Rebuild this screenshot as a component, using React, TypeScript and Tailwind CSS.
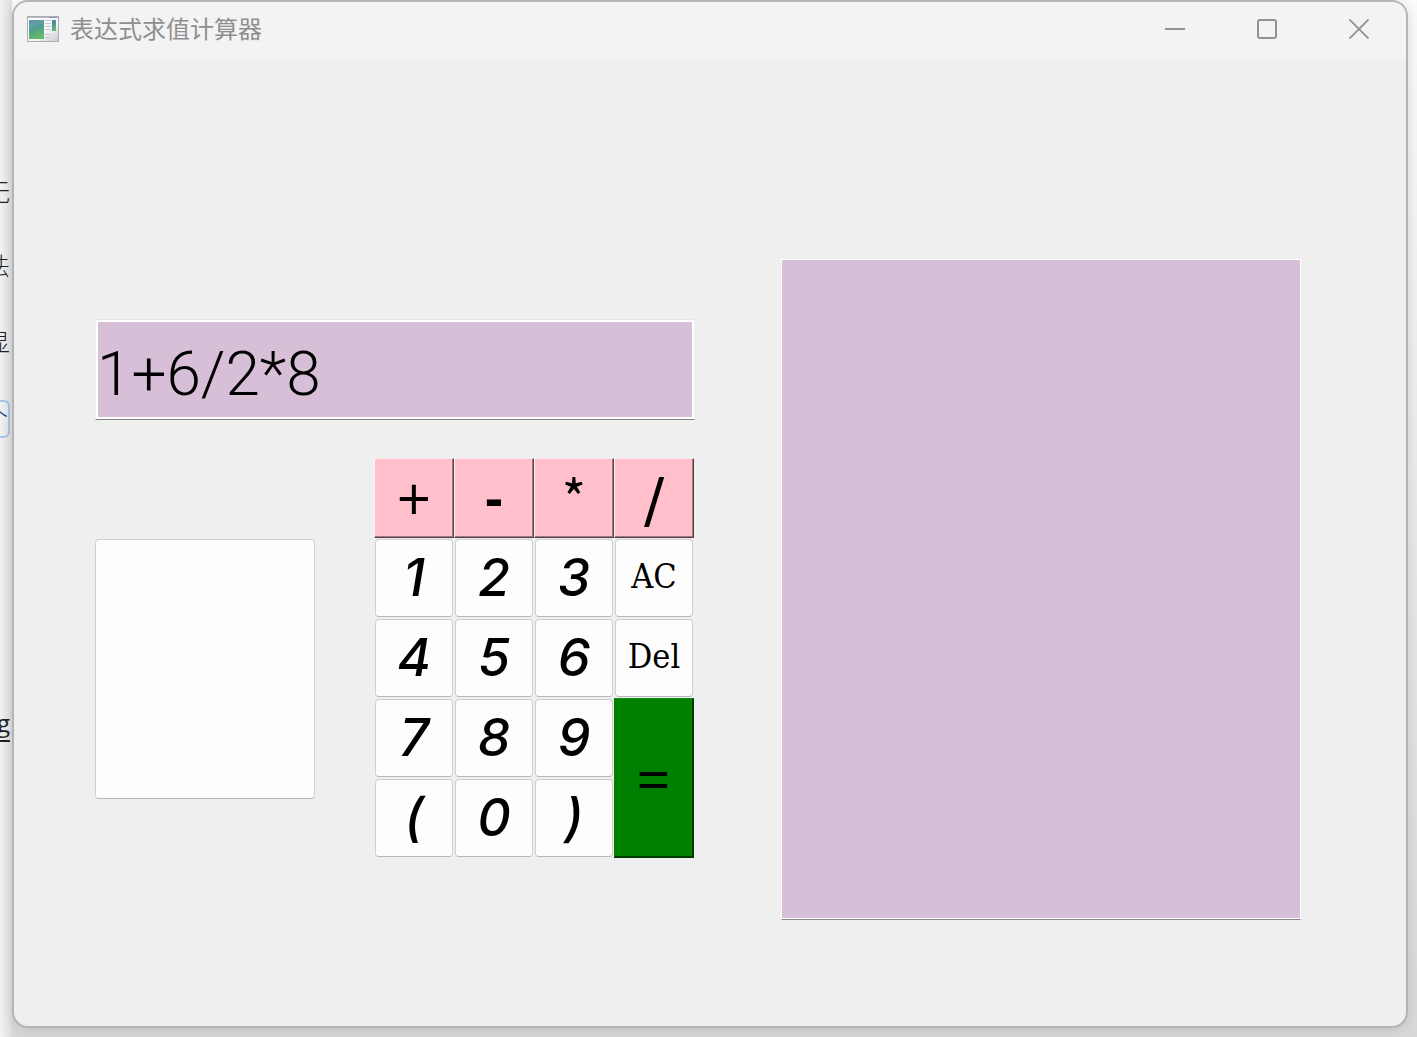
import { useState } from "react";

const plain =
  "m-px flex items-center justify-center overflow-hidden rounded-[4px] border border-[#cfcfcf] border-b-[#b8b8b8] bg-[#fdfdfd] leading-none text-black";
const operator =
  "flex items-center justify-center overflow-hidden border-t border-l border-t-[#f6ecee] border-l-[#fff3f5] border-r border-b border-r-[#504045] border-b-[#504045] bg-[#ffc0cb] leading-none text-black shadow-[inset_-1px_-1px_0_#a57b82]";
const digit = `${plain} font-['Inter'] text-[52px] font-medium italic`;
const word = `${plain} pb-1 font-['DejaVu_Serif_Condensed','DejaVu_Serif',serif] text-[34px]`;
const equals =
  "row-span-2 flex items-center justify-center border-t border-l border-r-2 border-b-2 border-t-[#129012] border-l-[#008000] border-r-[#003c00] border-b-[#003c00] bg-[#008000] font-['Open_Sans'] text-[60px] leading-none font-medium text-black";

type Key = { label: string; className: string };

const digits = (labels: string[]): Key[] => labels.map((label) => ({ label, className: digit }));

const keys: Key[] = [
  { label: "+", className: `${operator} font-['Open_Sans'] text-[60px] font-medium` },
  { label: "-", className: `${operator} pb-1 font-['Open_Sans'] text-[54px] font-bold` },
  { label: "*", className: `${operator} pb-1 font-['Noto_Sans_CJK_SC'] text-[52px]` },
  { label: "/", className: `${operator} pt-1 font-['DejaVu_Sans'] text-[60px]` },
  ...digits(["1", "2", "3"]),
  { label: "AC", className: word },
  ...digits(["4", "5", "6"]),
  { label: "Del", className: word },
  ...digits(["7", "8", "9"]),
  { label: "=", className: equals },
  ...digits(["(", "0", ")"]),
];

function AppIcon() {
  return (
    <svg width="32" height="26" viewBox="0 0 32 26" aria-hidden="true">
      <defs>
        <linearGradient id="pane" x1="0" y1="0" x2="0.3" y2="1">
          <stop offset="0" stopColor="#4b7fa5" />
          <stop offset="0.5" stopColor="#4f9c92" />
          <stop offset="1" stopColor="#66b96c" />
        </linearGradient>
        <linearGradient id="frame" x1="0" y1="0" x2="1" y2="1">
          <stop offset="0" stopColor="#ffffff" />
          <stop offset="0.6" stopColor="#f4f5f6" />
          <stop offset="1" stopColor="#c9cdd2" />
        </linearGradient>
      </defs>
      <rect x="0.5" y="0.5" width="31" height="25" fill="url(#frame)" stroke="#a9adb5" />
      <path d="M1 1.5h30" stroke="#b9bec6" />
      <path d="M22 1.5h8" stroke="#8f949c" />
      <rect x="2" y="4" width="15" height="19" fill="url(#pane)" />
      <path d="M2 14C7 10 11 8 17 7V4H2z" fill="#ffffff" opacity="0.12" />
      <path d="M18 4.5h6M18 7.5h6M18 10.5h6M18 13.5h6M18 18.5h6M18 21.5h5" stroke="#c6c8cb" />
      <rect x="25" y="4" width="4" height="11" fill="url(#pane)" />
    </svg>
  );
}

function BackgroundPage() {
  return (
    <aside
      aria-hidden="true"
      className="flex w-3 shrink-0 flex-col items-end overflow-hidden bg-linear-to-r from-[#f2f2f2] to-[#dedede] pt-[177px] pr-[2px] font-['Noto_Sans_CJK_SC',sans-serif] text-2xl leading-7 font-light text-[#222]"
    >
      <span>无</span>
      <span className="mt-[46px]">法</span>
      <span className="mt-12">显</span>
      <span className="mt-[45px] h-[38px] w-10 shrink-0 rounded-md border-2 border-[#a9c4ea] text-right text-[#1f3c88]">
        个
      </span>
      <span className="mt-[271px] font-['Open_Sans'] font-normal underline underline-offset-8">g</span>
    </aside>
  );
}

export default function App() {
  const [expression, setExpression] = useState("1+6/2*8");
  const [history, setHistory] = useState("");

  const press = (label: string) => {
    if (label === "AC") setExpression("");
    else if (label === "Del") setExpression((e) => e.slice(0, -1));
    else if (label === "=") setHistory((h) => `${h}${expression}\n`);
    else setExpression((e) => e + label);
  };

  return (
    <div className="flex min-h-screen overflow-hidden bg-[#f1f1f1]">
      <BackgroundPage />
      <div className="flex flex-1 bg-linear-to-b from-[#fafafa] to-[#d8d8d8] pr-[9px] pb-[9px]">
        <div className="flex flex-1 flex-col overflow-hidden rounded-2xl border-2 border-[#b4b4b4] bg-[#efefef] shadow-[0_2px_12px_rgba(0,0,0,0.12)]">
          <header className="flex h-14 items-center bg-[#f3f3f3] pr-px pb-[2px] pl-[13px]">
            <AppIcon />
            <h1 className="ml-[11px] flex-1 pb-[2px] font-['Noto_Sans_CJK_SC',sans-serif] text-2xl leading-8 text-[#8f8f8f]">
              表达式求值计算器
            </h1>
            <button aria-label="最小化" className="flex h-full w-[92px] items-center justify-center">
              <svg width="20" height="20" viewBox="0 0 20 20" fill="none" stroke="#919191" strokeWidth="2">
                <path d="M0 10h20" />
              </svg>
            </button>
            <button aria-label="最大化" className="flex h-full w-[92px] items-center justify-center">
              <svg width="20" height="20" viewBox="0 0 20 20" fill="none" stroke="#919191" strokeWidth="2">
                <rect x="1" y="1" width="18" height="18" rx="2" />
              </svg>
            </button>
            <button aria-label="关闭" className="flex h-full w-[92px] items-center justify-center">
              <svg width="20" height="20" viewBox="0 0 20 20" fill="none" stroke="#919191" strokeWidth="1.8">
                <path d="M0.5 0.5l19 19M19.5 0.5l-19 19" />
              </svg>
            </button>
          </header>

          <main className="grid flex-1 grid-cols-[600fr_520fr] gap-[86px] pt-[201px] pr-[105px] pb-[106px] pl-[81px]">
            <section className="flex flex-col pt-[60px]">
              <input
                aria-label="表达式"
                value={expression}
                onChange={(e) => setExpression(e.target.value)}
                className="h-[101px] w-full border border-[#f2f2f2] border-t-[#e4e4e4] border-b-[#858585] bg-[#d8bfd8] px-px pt-2 font-['Roboto'] text-[62px] leading-none font-light text-black shadow-[inset_0_0_0_2px_#fff] outline-none"
              />
              <div className="mt-[38px] flex">
                <button
                  aria-label="结果"
                  className="mt-[81px] h-[260px] flex-1 rounded-[4px] border border-[#cfcfcf] border-b-[#b8b8b8] bg-[#fdfdfd]"
                />
                <div className="mr-px ml-[59px] grid w-80 auto-rows-[80px] grid-cols-4">
                  {keys.map((k) => (
                    <button key={k.label} onClick={() => press(k.label)} className={k.className}>
                      {k.label}
                    </button>
                  ))}
                </div>
              </div>
            </section>
            <textarea
              aria-label="计算记录"
              value={history}
              onChange={(e) => setHistory(e.target.value)}
              className="h-full w-full resize-none border border-white border-b-[#858585] bg-[#d8bfd8] p-2 font-['Roboto'] text-2xl text-black shadow-[inset_0_-1px_0_#fff] outline-none"
            />
          </main>
        </div>
      </div>
    </div>
  );
}
